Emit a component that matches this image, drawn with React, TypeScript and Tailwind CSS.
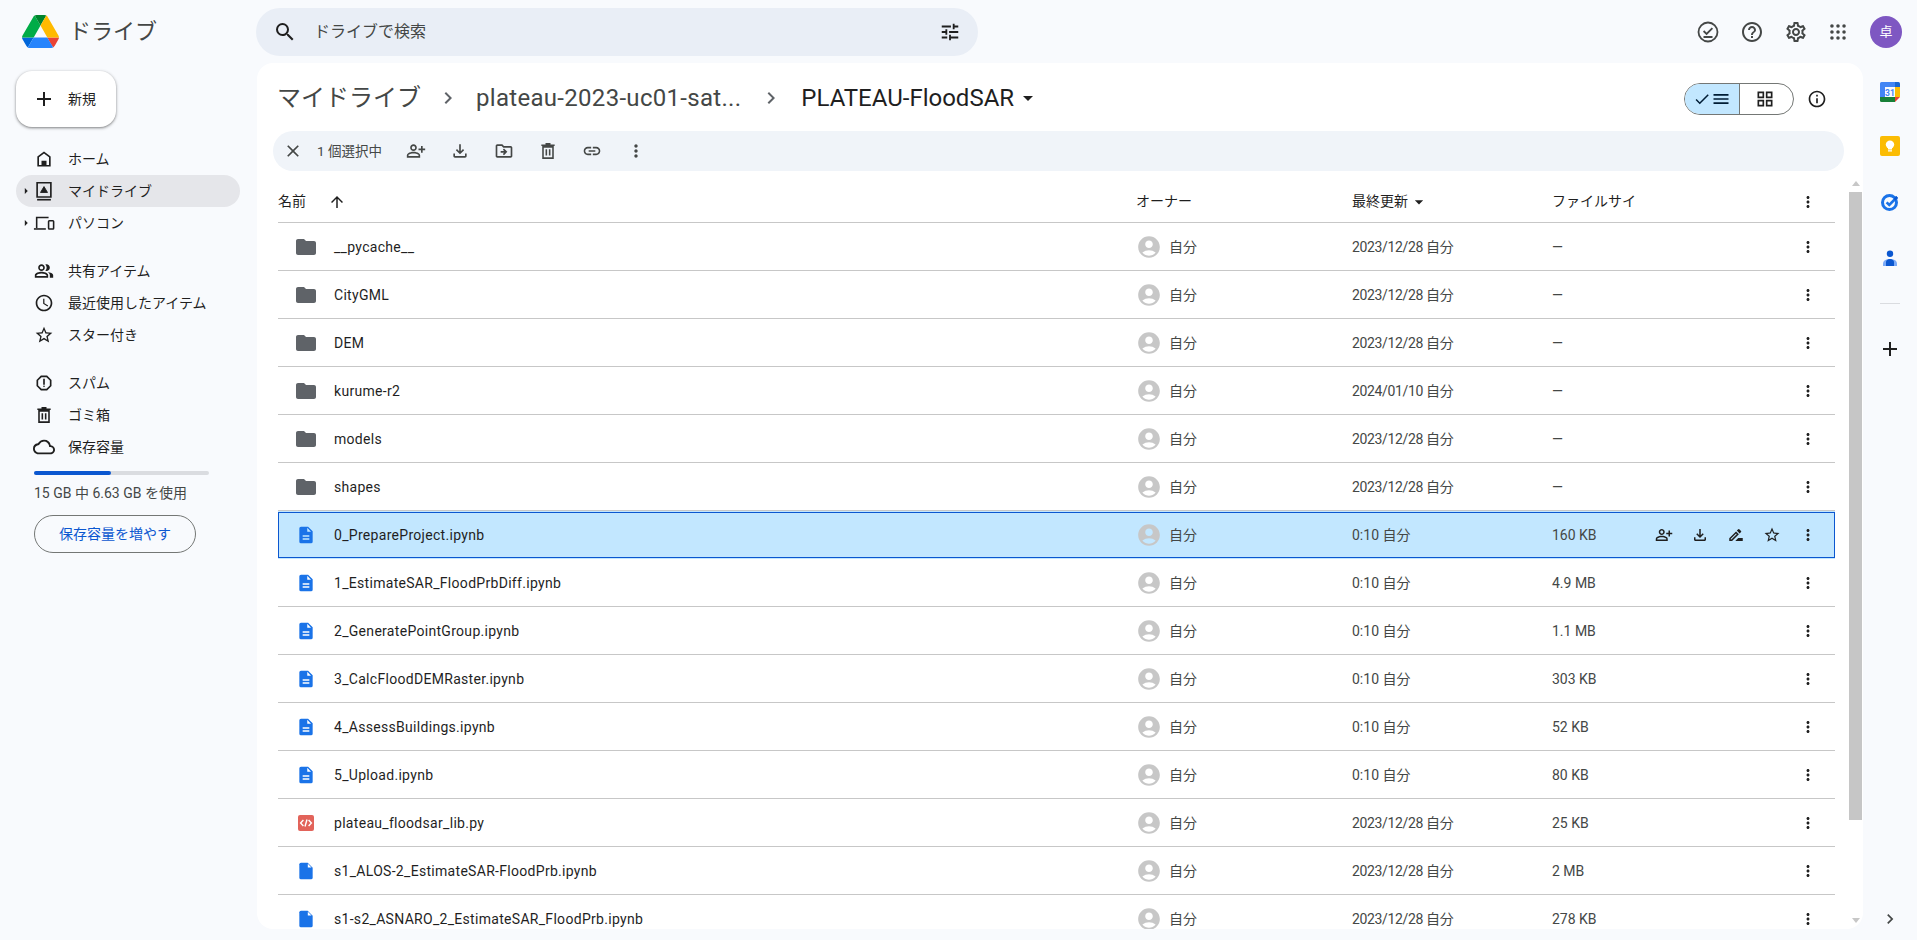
import { ReactNode } from "react";
import {
  MdSearch, MdTune, MdHelpOutline, MdOutlineSettings, MdInfoOutline, MdCheck, MdMenu, MdOutlineGridView,
  MdAdd, MdOutlinePeopleAlt, MdAccessTime, MdStarBorder, MdOutlineReport, MdOutlineCloud, MdClose,
  MdOutlinePersonAddAlt, MdOutlineFileDownload, MdOutlineDriveFileMove, MdLink, MdMoreVert, MdArrowUpward,
  MdFolder, MdAccountCircle, MdChevronRight, MdArrowDropDown, MdArrowRight, MdOutlineDriveFileRenameOutline,
} from "react-icons/md";

type FileRow = { name: string; kind: "folder" | "doc" | "blank" | "code"; modified: string; size: string };

const files: FileRow[] = [
  { name: "__pycache__", kind: "folder", modified: "2023/12/28 自分", size: "—" },
  { name: "CityGML", kind: "folder", modified: "2023/12/28 自分", size: "—" },
  { name: "DEM", kind: "folder", modified: "2023/12/28 自分", size: "—" },
  { name: "kurume-r2", kind: "folder", modified: "2024/01/10 自分", size: "—" },
  { name: "models", kind: "folder", modified: "2023/12/28 自分", size: "—" },
  { name: "shapes", kind: "folder", modified: "2023/12/28 自分", size: "—" },
  { name: "0_PrepareProject.ipynb", kind: "doc", modified: "0:10 自分", size: "160 KB" },
  { name: "1_EstimateSAR_FloodPrbDiff.ipynb", kind: "doc", modified: "0:10 自分", size: "4.9 MB" },
  { name: "2_GeneratePointGroup.ipynb", kind: "doc", modified: "0:10 自分", size: "1.1 MB" },
  { name: "3_CalcFloodDEMRaster.ipynb", kind: "doc", modified: "0:10 自分", size: "303 KB" },
  { name: "4_AssessBuildings.ipynb", kind: "doc", modified: "0:10 自分", size: "52 KB" },
  { name: "5_Upload.ipynb", kind: "doc", modified: "0:10 自分", size: "80 KB" },
  { name: "plateau_floodsar_lib.py", kind: "code", modified: "2023/12/28 自分", size: "25 KB" },
  { name: "s1_ALOS-2_EstimateSAR-FloodPrb.ipynb", kind: "blank", modified: "2023/12/28 自分", size: "2 MB" },
  { name: "s1-s2_ASNARO_2_EstimateSAR_FloodPrb.ipynb", kind: "blank", modified: "2023/12/28 自分", size: "278 KB" },
];

const DriveLogo = () => (
  <svg viewBox="0 0 87.3 78" className="w-[37px] h-[33px]">
    <path d="m6.6 66.85 3.85 6.65c.8 1.4 1.95 2.5 3.3 3.3l13.75-23.8h-27.5c0 1.55.4 3.1 1.2 4.5z" fill="#0066da" />
    <path d="m43.65 25-13.75-23.8c-1.35.8-2.5 1.9-3.3 3.3l-25.4 44a9.06 9.06 0 0 0 -1.2 4.5h27.5z" fill="#00ac47" />
    <path d="m73.55 76.8c1.35-.8 2.5-1.9 3.3-3.3l1.6-2.75 7.65-13.25c.8-1.4 1.2-2.95 1.2-4.5h-27.502l5.852 11.5z" fill="#ea4335" />
    <path d="m43.65 25 13.75-23.8c-1.35-.8-2.9-1.2-4.5-1.2h-18.5c-1.6 0-3.15.45-4.5 1.2z" fill="#00832d" />
    <path d="m59.8 53h-32.3l-13.75 23.8c1.35.8 2.9 1.2 4.5 1.2h50.8c1.6 0 3.15-.45 4.5-1.2z" fill="#2684fc" />
    <path d="m73.4 26.5-12.7-22c-.8-1.4-1.95-2.5-3.3-3.3l-13.75 23.8 16.15 28h27.45c0-1.55-.4-3.1-1.2-4.5z" fill="#ffba00" />
  </svg>
);

const HomeIcon = () => (
  <svg viewBox="0 0 24 24" className="w-5 h-5" fill="#1f1f1f">
    <path fillRule="evenodd" d="M12 3 4 9v12h16V9l-8-6Zm0 2.5 6 4.5v9.2h-3V14H9v5.2H6V10l6-4.5Z" />
  </svg>
);

const MyDriveIcon = () => (
  <svg viewBox="0 0 24 24" className="w-[22px] h-[22px]" fill="none" stroke="#1f1f1f" strokeWidth="1.8">
    <path d="M4.5 3h15v15.5h-15z" />
    <path d="M4.5 21.5h15" />
    <path d="M12 7.2 8.2 13.6h7.6L12 7.2Z" fill="#1f1f1f" strokeWidth="1" />
  </svg>
);

const ComputerIcon = () => (
  <svg viewBox="0 0 24 24" className="w-[22px] h-[22px]" fill="none" stroke="#1f1f1f" strokeWidth="1.7">
    <path d="M4 17.5V6h13" />
    <path d="M1 18.5h13" />
    <rect x="17" y="9.5" width="5.5" height="9" rx="0.8" />
  </svg>
);

const TrashIcon = ({ size = "w-5 h-5", color = "#1f1f1f" }: { size?: string; color?: string }) => (
  <svg viewBox="0 0 24 24" className={size} fill="none" stroke={color} strokeWidth="1.9">
    <path d="M6 7h12v13.5H6z" />
    <path d="M4 5h16M9 3.2h6M10 10v7.5M14 10v7.5" />
  </svg>
);

const DocIcon = () => (
  <svg viewBox="0 0 24 24" className="w-5 h-5" fill="#1a73e8">
    <path fillRule="evenodd" d="M6 2h8.5L20 7.5V20a2 2 0 0 1-2 2H6a2 2 0 0 1-2-2V4a2 2 0 0 1 2-2Zm2 10.2v1.8h8v-1.8H8Zm0 3.8v1.8h8V16H8Zm5.5-12.6V8H18l-4.5-4.6Z" />
  </svg>
);

const BlankIcon = () => (
  <svg viewBox="0 0 24 24" className="w-5 h-5" fill="#1a73e8">
    <path d="M6 2h8l6 6v12a2 2 0 0 1-2 2H6a2 2 0 0 1-2-2V4a2 2 0 0 1 2-2Z" />
    <path d="M14.2 3.4V7.8h4.4L14.2 3.4Z" fill="#ffffff" />
  </svg>
);

const CodeIcon = () => (
  <svg viewBox="0 0 16 16" className="w-4 h-4">
    <rect width="16" height="16" rx="2" fill="#e2635a" />
    <path d="M5.4 5 2.6 8l2.8 3M10.6 5l2.8 3-2.8 3M9 4.5 7 11.5" fill="none" stroke="#fff" strokeWidth="1.4" />
  </svg>
);

const TasksCheckIcon = () => (
  <svg viewBox="0 0 24 24" className="w-6 h-6" fill="none" stroke="#444746" strokeWidth="1.8">
    <circle cx="12" cy="12" r="9.5" />
    <path d="m7.6 11 3 3 5.8-5.8M7.5 17h9" />
  </svg>
);

const AppsIcon = () => (
  <svg viewBox="0 0 18 18" className="w-4 h-4" fill="#444746">
    {[2.2, 9, 15.8].map((y) => [2.2, 9, 15.8].map((x) => <circle key={`${x}-${y}`} cx={x} cy={y} r="2" />))}
  </svg>
);

const CalendarIcon = () => (
  <svg viewBox="0 0 20 20" className="w-5 h-5">
    <path d="M1.5 0H15v5H5v10H0V1.5A1.5 1.5 0 0 1 1.5 0Z" fill="#4285f4" />
    <path d="M15 0h3.5A1.5 1.5 0 0 1 20 1.5V5h-5V0Z" fill="#1967d2" />
    <path d="M15 5h5v10h-5z" fill="#fbbc04" />
    <path d="M0 15h15v5H1.5A1.5 1.5 0 0 1 0 18.5V15Z" fill="#188038" />
    <path d="M15 15h5l-5 5v-5Z" fill="#ea4335" />
    <text x="10" y="13.6" textAnchor="middle" fontSize="8.5" fontWeight="700" fill="#4285f4">31</text>
  </svg>
);

const KeepIcon = () => (
  <svg viewBox="0 0 20 20" className="w-5 h-5">
    <rect width="20" height="20" rx="2" fill="#fbbc04" />
    <circle cx="10" cy="8.6" r="4.2" fill="#fff" />
    <path d="M8 11h4v2.4H8zM8 14.3h4v1.3H8z" fill="#fff" />
  </svg>
);

const TasksIcon = () => (
  <svg viewBox="0 0 20 20" className="w-5 h-5" fill="none">
    <circle cx="9.5" cy="10.5" r="7" stroke="#1a73e8" strokeWidth="3" />
    <path d="m6.6 10.3 2.7 2.7 7.8-8" stroke="#1a73e8" strokeWidth="2.6" />
    <path d="m14.4 7.6 2.7-2.6" stroke="#0b57d0" strokeWidth="2.6" />
  </svg>
);

const ContactsIcon = () => (
  <svg viewBox="0 0 20 20" className="w-5 h-5">
    <circle cx="10" cy="4.8" r="3.2" fill="#0b57d0" />
    <path d="M3 17v-2.2C3 11.5 6 10 10 10s7 1.5 7 4.8V17H3Z" fill="#7baaf7" />
    <path d="M6 17v-4c0-1.6 1.8-3 4-3s4 1.4 4 3v4H6Z" fill="#0b57d0" />
  </svg>
);

const NavItem = ({ icon, label, active, arrow }: { icon: ReactNode; label: string; active?: boolean; arrow?: boolean }) => (
  <div className={`relative flex items-center h-8 w-[224px] rounded-full text-[14px] text-[#1f1f1f] ${active ? "bg-[#e5e6ea]" : ""}`}>
    {arrow && <MdArrowRight className="absolute left-[3px] w-[14px] h-[14px] text-[#1f1f1f]" />}
    <span className="flex items-center justify-center w-[22px] h-[22px] ml-[17px]">{icon}</span>
    <span className="ml-[13px]">{label}</span>
  </div>
);

const ToolIcon = ({ children }: { children: ReactNode }) => (
  <span className="flex items-center justify-center w-[44px] h-10 text-[#444746]">{children}</span>
);

const TopIcon = ({ children }: { children: ReactNode }) => (
  <span className="flex items-center justify-center w-[44px] h-10 text-[#444746]">{children}</span>
);

const FileIcon = ({ kind }: { kind: FileRow["kind"] }) => {
  if (kind === "folder") return <MdFolder className="w-6 h-6 text-[#5f6368]" />;
  if (kind === "doc") return <DocIcon />;
  if (kind === "blank") return <BlankIcon />;
  return <CodeIcon />;
};

const Row = ({ file, selected }: { file: FileRow; selected?: boolean }) => (
  <div className={`h-[48px] shrink-0 pt-px border-b ${selected ? "bg-[#c2e7ff] border-[#c2e7ff]" : "border-[#c7c7c7]"}`}>
    <div className={`h-[46px] grid grid-cols-[857px_216px_200px_1fr] items-center border text-[14px] text-[#444746] ${selected ? "border-[#0b57d0]" : "border-transparent"}`}>
      <div className="flex items-center pl-[15px]">
        <span className="flex items-center justify-center w-6 h-6">
          <FileIcon kind={file.kind} />
        </span>
        <span className="ml-[16px] text-[#1f1f1f] tracking-[0.3px]">{file.name}</span>
      </div>
      <div className="flex items-center">
        <MdAccountCircle className="w-[26px] h-[26px] text-[#c7c7c7]" />
        <span className="ml-[7px]">自分</span>
      </div>
      <div className={file.modified.length > 8 ? "tracking-[-0.35px]" : ""}>{file.modified}</div>
      <div className="flex items-center justify-between pr-[8px]">
        <span>{file.size}</span>
        <div className="flex items-center text-[#1f1f1f]">
          {selected && (
            <>
              <span className="flex justify-center w-9"><MdOutlinePersonAddAlt className="w-[18px] h-[18px]" /></span>
              <span className="flex justify-center w-9"><MdOutlineFileDownload className="w-[18px] h-[18px]" /></span>
              <span className="flex justify-center w-9"><MdOutlineDriveFileRenameOutline className="w-[18px] h-[18px]" /></span>
              <span className="flex justify-center w-9"><MdStarBorder className="w-[18px] h-[18px]" /></span>
            </>
          )}
          <span className="flex justify-center w-9"><MdMoreVert className="w-[18px] h-[18px]" /></span>
        </div>
      </div>
    </div>
  </div>
);

export default function App() {
  return (
    <div className="h-[940px] w-full overflow-hidden bg-[#f8fafd] flex flex-col [font-family:Roboto,'Noto_Sans_CJK_JP',sans-serif]">
      <header className="h-[63px] shrink-0 flex items-center">
        <div className="w-[256px] flex items-center pl-[22px]">
          <DriveLogo />
          <span className="ml-[10px] text-[22px] text-[#444746]">ドライブ</span>
        </div>
        <div className="w-[722px] h-12 rounded-3xl bg-[#e9eef6] flex items-center pl-[17px] pr-[16px]">
          <MdSearch className="w-6 h-6 text-[#1f1f1f]" />
          <span className="ml-[17px] text-[16px] text-[#444746] flex-1">ドライブで検索</span>
          <MdTune className="w-[22px] h-[22px] text-[#1f1f1f] mr-[1px]" />
        </div>
        <div className="flex-1" />
        <div className="flex items-center pr-[15px]">
          <TopIcon><TasksCheckIcon /></TopIcon>
          <TopIcon><MdHelpOutline className="w-6 h-6" /></TopIcon>
          <TopIcon><MdOutlineSettings className="w-6 h-6" /></TopIcon>
          <span className="flex items-center justify-center w-10 h-10"><AppsIcon /></span>
          <div className="ml-[12px] w-8 h-8 rounded-full bg-[#7e57c2] text-white text-[13px] flex items-center justify-center">卓</div>
        </div>
      </header>

      <div className="flex flex-1 min-h-0">
        <aside className="w-[257px] shrink-0 pl-[16px] pt-[8px]">
          <div className="w-[100px] h-14 rounded-2xl bg-white shadow-[0_1px_3px_1px_rgba(0,0,0,0.16),0_1px_2px_rgba(0,0,0,0.3)] flex items-center pl-[16px] text-[14px] text-[#1f1f1f]">
            <MdAdd className="w-6 h-6" />
            <span className="ml-[12px] text-[14px]">新規</span>
          </div>
          <nav className="mt-[16px]">
            <NavItem icon={<HomeIcon />} label="ホーム" />
            <NavItem icon={<MyDriveIcon />} label="マイドライブ" active arrow />
            <NavItem icon={<ComputerIcon />} label="パソコン" arrow />
            <div className="h-4" />
            <NavItem icon={<MdOutlinePeopleAlt className="w-5 h-5" />} label="共有アイテム" />
            <NavItem icon={<MdAccessTime className="w-5 h-5" />} label="最近使用したアイテム" />
            <NavItem icon={<MdStarBorder className="w-5 h-5" />} label="スター付き" />
            <div className="h-4" />
            <NavItem icon={<MdOutlineReport className="w-5 h-5" />} label="スパム" />
            <NavItem icon={<TrashIcon />} label="ゴミ箱" />
            <NavItem icon={<MdOutlineCloud className="w-[22px] h-[22px]" />} label="保存容量" />
          </nav>
          <div className="ml-[18px] mt-[8px] w-[175px] h-1 rounded-full bg-[#dadce0] flex">
            <div className="w-[77px] h-1 rounded-full bg-[#0b57d0]" />
          </div>
          <div className="ml-[18px] mt-[10px] text-[14px] leading-[16px] text-[#444746]">15 GB 中 6.63 GB を使用</div>
          <div className="ml-[18px] mt-[14px] w-[162px] h-[38px] rounded-full border border-[#747775] flex items-center justify-center text-[14px] text-[#0b57d0]">保存容量を増やす</div>
        </aside>

        <main className="w-[1606px] shrink-0 mb-[11px] bg-white rounded-2xl overflow-hidden flex flex-col">
          <div className="h-[68px] shrink-0 flex items-center pl-[20px] pt-[2px]">
            <span className="text-[24px] text-[#444746]">マイドライブ</span>
            <MdChevronRight className="ml-[15px] w-6 h-6 text-[#5f6368]" />
            <span className="ml-[16px] text-[24px] tracking-[0.3px] text-[#444746]">plateau-2023-uc01-sat...</span>
            <MdChevronRight className="ml-[18px] w-6 h-6 text-[#5f6368]" />
            <span className="ml-[18px] text-[24px] text-[#1f1f1f]">PLATEAU-FloodSAR</span>
            <MdArrowDropDown className="w-6 h-6 ml-[2px] text-[#1f1f1f]" />
            <div className="flex-1" />
            <div className="flex h-8 w-[110px] mt-[2px] rounded-full border border-[#747775] overflow-hidden mr-[13px]">
              <div className="w-[55px] bg-[#c2e7ff] border-r border-[#747775] flex items-center justify-center text-[#001d35]">
                <MdCheck className="w-[18px] h-[18px]" />
                <MdMenu className="w-[20px] h-[20px]" />
              </div>
              <div className="flex-1 flex items-center justify-center pr-[4px] text-[#1f1f1f]">
                <MdOutlineGridView className="w-5 h-5" />
              </div>
            </div>
            <MdInfoOutline className="w-5 h-5 mt-[2px] text-[#1f1f1f] mr-[36px]" />
          </div>

          <div className="h-10 shrink-0 ml-[16px] mr-[19px] rounded-full bg-[#f0f4f9] flex items-center pl-[4px] text-[#444746]">
            <span className="flex items-center justify-center w-8 h-8"><MdClose className="w-5 h-5" /></span>
            <span className="ml-[8px] mr-[12px] text-[13.5px]">1 個選択中</span>
            <ToolIcon><MdOutlinePersonAddAlt className="w-5 h-5" /></ToolIcon>
            <ToolIcon><MdOutlineFileDownload className="w-5 h-5" /></ToolIcon>
            <ToolIcon><MdOutlineDriveFileMove className="w-5 h-5" /></ToolIcon>
            <ToolIcon><TrashIcon color="#444746" /></ToolIcon>
            <ToolIcon><MdLink className="w-5 h-5" /></ToolIcon>
            <ToolIcon><MdMoreVert className="w-5 h-5" /></ToolIcon>
          </div>

          <div className="flex-1 min-h-0 flex">
            <div className="flex-1 min-w-0 pl-[21px] mr-[14px] overflow-hidden flex flex-col">
              <div className="h-[52px] shrink-0 border-b border-[#c7c7c7] grid grid-cols-[858px_216px_200px_1fr] items-center text-[14px] text-[#1f1f1f] pt-[10px]">
                <div className="flex items-center">
                  <span>名前</span>
                  <MdArrowUpward className="ml-[22px] w-[18px] h-[18px]" />
                </div>
                <div>オーナー</div>
                <div className="flex items-center">
                  <span>最終更新</span>
                  <MdArrowDropDown className="w-[20px] h-[20px] ml-px" />
                </div>
                <div className="flex items-center justify-between pr-[9px]">
                  <span>ファイルサイ</span>
                  <span className="flex justify-center w-9"><MdMoreVert className="w-[18px] h-[18px]" /></span>
                </div>
              </div>
              {files.map((f, i) => (
                <Row key={f.name} file={f} selected={i === 6} />
              ))}
            </div>

            <div className="w-[13px] mr-px shrink-0 flex flex-col items-center">
              <div className="mt-[10px] w-0 h-0 border-x-[4px] border-x-transparent border-b-[5px] border-b-[#c7c7c7]" />
              <div className="mt-[6px] w-full h-[628px] bg-[#c6c6c6]" />
              <div className="mt-[98px] w-0 h-0 border-x-[4px] border-x-transparent border-t-[5px] border-t-[#c7c7c7]" />
            </div>
          </div>
        </main>

        <aside className="flex-1 flex flex-col items-center pr-[1px] relative">
          <div className="mt-[19px]"><CalendarIcon /></div>
          <div className="mt-[34px]"><KeepIcon /></div>
          <div className="mt-[36px]"><TasksIcon /></div>
          <div className="mt-[37px]"><ContactsIcon /></div>
          <div className="mt-[34px] w-5 h-px bg-[#dadce0]" />
          <MdAdd className="mt-[33px] w-6 h-6 text-[#1f1f1f]" />
          <div className="flex-1" />
          <MdChevronRight className="mb-[11px] w-5 h-5 text-[#444746]" />
        </aside>
      </div>
    </div>
  );
}
